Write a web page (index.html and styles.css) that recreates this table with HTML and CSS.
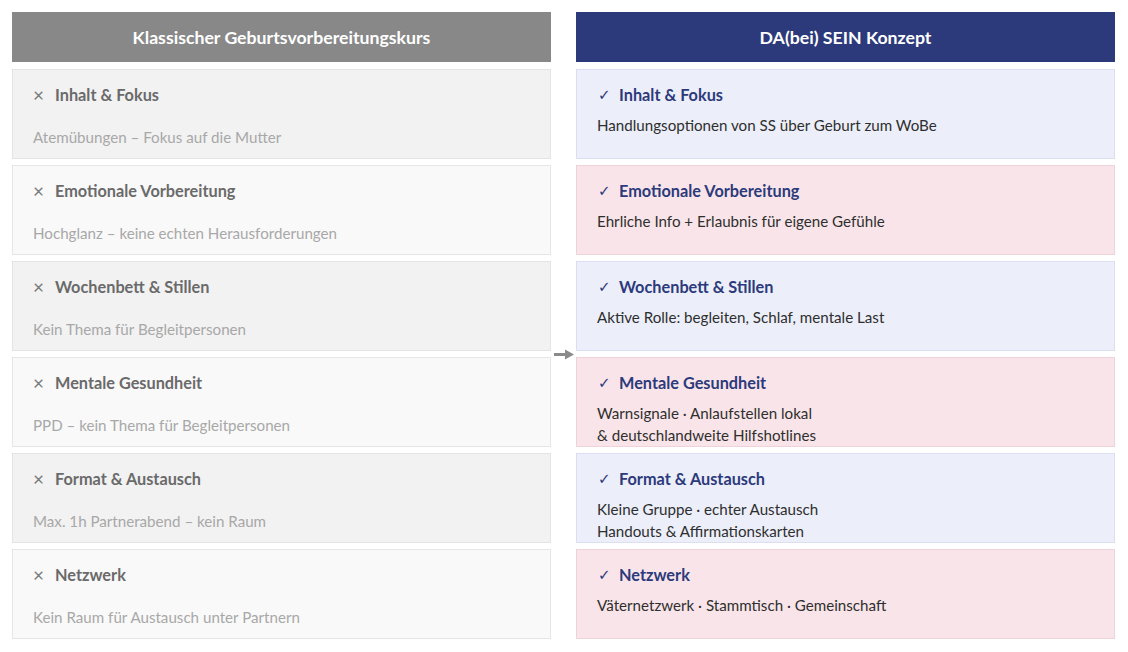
FILE: index.html
```html
<!DOCTYPE html>
<html lang="de">
<head>
<meta charset="utf-8">
<title>Vergleich</title>
<link rel="stylesheet" href="styles.css">
</head>
<body>
<div class="compare">
  <div class="head head-classic">Klassischer Geburtsvorbereitungskurs</div>
  <div class="head-spacer"></div>
  <div class="head head-sein">DA(bei) SEIN Konzept</div>

  <div class="col">
    <div class="card classic odd"><div class="title"><span class="mark x">×</span>Inhalt &amp; Fokus</div><div class="desc">Atemübungen – Fokus auf die Mutter</div></div>
    <div class="card classic even"><div class="title"><span class="mark x">×</span>Emotionale Vorbereitung</div><div class="desc">Hochglanz – keine echten Herausforderungen</div></div>
    <div class="card classic odd"><div class="title"><span class="mark x">×</span>Wochenbett &amp; Stillen</div><div class="desc">Kein Thema für Begleitpersonen</div></div>
    <div class="card classic even"><div class="title"><span class="mark x">×</span>Mentale Gesundheit</div><div class="desc">PPD – kein Thema für Begleitpersonen</div></div>
    <div class="card classic odd"><div class="title"><span class="mark x">×</span>Format &amp; Austausch</div><div class="desc">Max. 1h Partnerabend – kein Raum</div></div>
    <div class="card classic even"><div class="title"><span class="mark x">×</span>Netzwerk</div><div class="desc">Kein Raum für Austausch unter Partnern</div></div>
  </div>

  <div class="arrow">
    <svg width="20" height="11" viewBox="0 0 20 11"><path d="M0 5.5 H12" stroke="#8a8a8a" stroke-width="3"/><path d="M11 0.5 L20 5.5 L11 10.5 Z" fill="#8a8a8a"/></svg>
  </div>

  <div class="col">
    <div class="card sein blue"><div class="title"><span class="mark check">✓</span>Inhalt &amp; Fokus</div><div class="desc">Handlungsoptionen von SS über Geburt zum WoBe</div></div>
    <div class="card sein pink"><div class="title"><span class="mark check">✓</span>Emotionale Vorbereitung</div><div class="desc">Ehrliche Info + Erlaubnis für eigene Gefühle</div></div>
    <div class="card sein blue"><div class="title"><span class="mark check">✓</span>Wochenbett &amp; Stillen</div><div class="desc">Aktive Rolle: begleiten, Schlaf, mentale Last</div></div>
    <div class="card sein pink"><div class="title"><span class="mark check">✓</span>Mentale Gesundheit</div><div class="desc">Warnsignale · Anlaufstellen lokal<br>&amp; deutschlandweite Hilfshotlines</div></div>
    <div class="card sein blue"><div class="title"><span class="mark check">✓</span>Format &amp; Austausch</div><div class="desc">Kleine Gruppe · echter Austausch<br>Handouts &amp; Affirmationskarten</div></div>
    <div class="card sein pink"><div class="title"><span class="mark check">✓</span>Netzwerk</div><div class="desc">Väternetzwerk · Stammtisch · Gemeinschaft</div></div>
  </div>
</div>
</body>
</html>
```

FILE: styles.css
```css
* { box-sizing: border-box; }
html, body { margin: 0; padding: 0; background: #fff; }
body {
  font-family: Lato, "Open Sans", "Liberation Sans", sans-serif;
  padding: 12px 13px 12px 12px;
}
.compare {
  display: grid;
  grid-template-columns: 539px 25px 539px;
  grid-template-rows: 50px auto;
  row-gap: 7px;
}
.head {
  display: flex;
  align-items: center;
  justify-content: center;
  color: #fff;
  font-weight: 700;
  font-size: 17.7px;
}
.head-classic { background: #888888; }
.head-sein { background: #2c3a7b; }
.col {
  display: flex;
  flex-direction: column;
  gap: 6px;
}
.arrow {
  display: flex;
  align-items: center;
  justify-content: center;
  padding-left: 1px;
}
.arrow svg { display: block; }
.card {
  height: 90px;
  border: 1px solid;
  padding: 15px 20px 0 20px;
}
.title {
  font-size: 16.3px;
  font-weight: 700;
  line-height: 20px;
  display: flex;
  align-items: center;
}
.mark {
  display: inline-block;
  width: 22px;
  font-weight: 400;
}
.x { font-size: 19px; color: #7a7a7a; }
.check { font-size: 15px; color: #2c3a7b; font-family: "DejaVu Sans", sans-serif; padding-left: 1px; }
.desc {
  font-size: 15.15px;
  line-height: 22px;
}
.classic .title { color: #6a6a6a; }
.classic .desc { color: #a8a8a8; margin-top: 21px; }
.classic.odd { background: #f2f2f2; border-color: #e4e4e4; }
.classic.even { background: #f9f9f9; border-color: #e6e6e6; }
.sein .title { color: #2c3a7b; }
.sein .desc { color: #2e2e2e; margin-top: 9px; }
.sein.blue { background: #eceefa; border-color: #dcdff2; }
.sein.pink { background: #f9e5e9; border-color: #f0d3da; }
```
